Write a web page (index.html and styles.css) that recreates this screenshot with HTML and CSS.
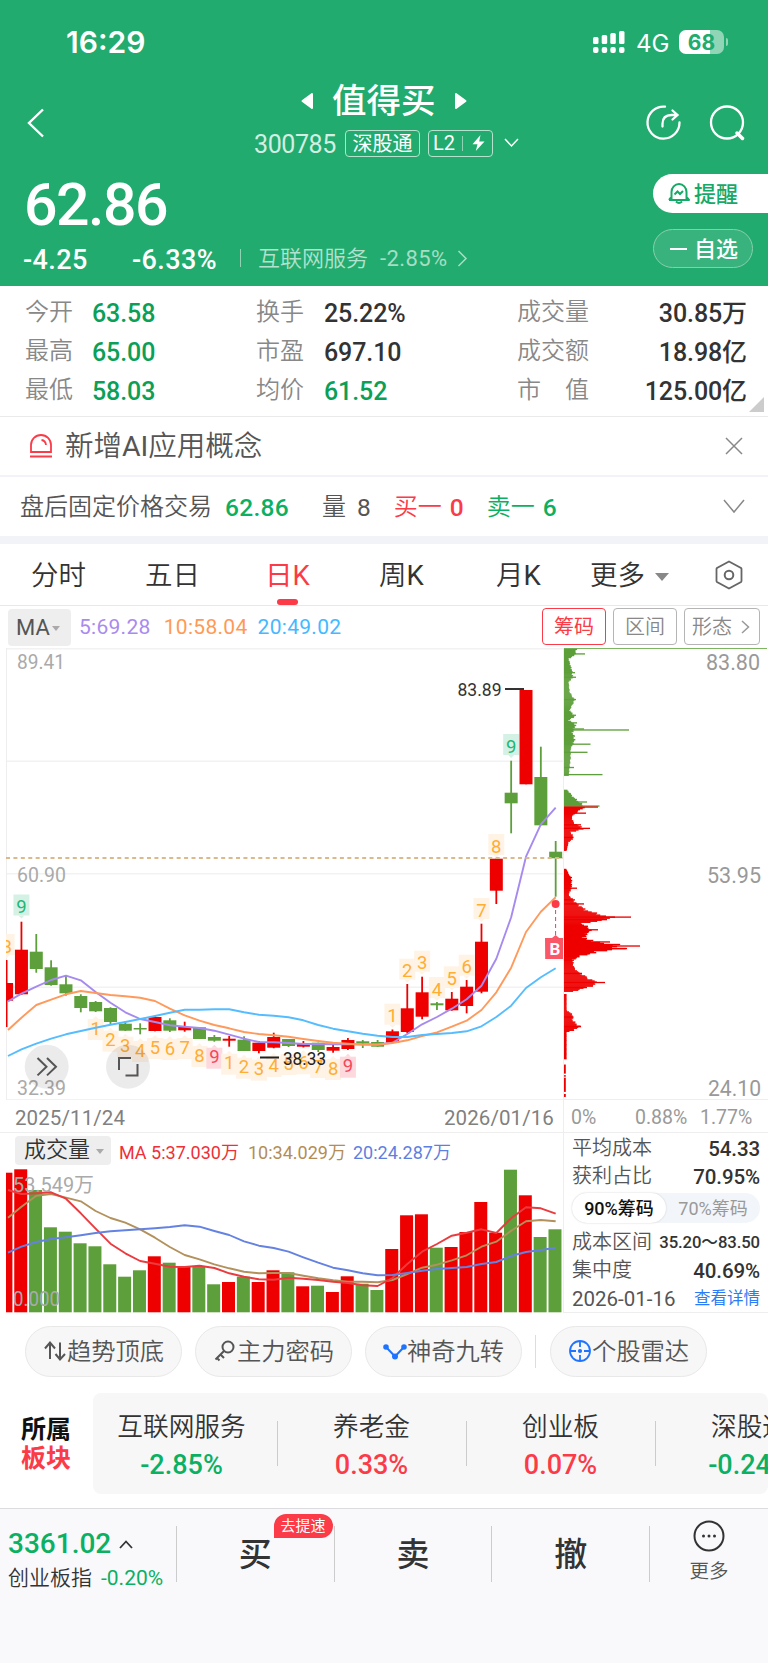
FILE: index.html
```html
<!DOCTYPE html>
<html lang="zh-CN">
<head>
    <meta charset="UTF-8">
    <meta name="viewport" content="width=device-width, initial-scale=1.0">
    <title>值得买 300785</title>
    <link rel="stylesheet" href="styles.css">
</head>
<body>

    <header>
        <div class="status-bar">
            <span class="time">16:29</span>
            <svg class="signal" width="33" height="24" viewBox="0 0 33 24" fill="#fff">
                <rect x="0" y="7" width="5.5" height="7" rx="1.5"/><rect x="8.7" y="5" width="5.5" height="9" rx="1.5"/>
                <rect x="17.3" y="3" width="5.5" height="11" rx="1.5"/><rect x="26" y="1" width="5.5" height="13" rx="1.5"/>
                <rect x="0" y="17" width="5.5" height="6" rx="2"/><rect x="8.7" y="17" width="5.5" height="6" rx="2"/>
                <rect x="17.3" y="17" width="5.5" height="6" rx="2"/><rect x="26" y="17" width="5.5" height="6" rx="2"/>
            </svg>
            <span class="network">4G</span>
            <span class="battery">68</span>
            <span class="battery-tip"></span>
        </div>

        <div class="nav">
            <svg class="back" width="18" height="30" viewBox="0 0 18 30" fill="none" stroke="#fff" stroke-width="2.4"><path d="M16 1.5 2 15l14 13.5"/></svg>
            <div class="title">
                <h1>
                    <svg width="12" height="18" viewBox="0 0 12 18"><path d="M11 2v14L1.5 9z" fill="#fff" stroke="#fff" stroke-width="2" stroke-linejoin="round"/></svg>
                    <span>值得买</span>
                    <svg width="12" height="18" viewBox="0 0 12 18"><path d="M1 2v14L10.5 9z" fill="#fff" stroke="#fff" stroke-width="2" stroke-linejoin="round"/></svg>
                </h1>
                <div class="code">
                    <span class="code-number">300785</span>
                    <span class="tag">深股通</span>
                    <span class="tag level">L2<i></i><svg width="13" height="16" viewBox="0 0 13 16"><path d="M8.5 0 0.5 9.2h5L3.8 16 12.5 6.5H7.2z" fill="#fff"/></svg></span>
                    <svg width="15" height="10" viewBox="0 0 15 10" fill="none" stroke="#fff" stroke-width="1.5"><path d="M1 1l6.5 7L14 1"/></svg>
                </div>
            </div>
            <svg class="share" width="38" height="38" viewBox="0 0 38 38" fill="none" stroke="#fff" stroke-width="2.3">
                <path d="M20 2.7A16 16 0 1 0 34.5 18.5" stroke-linecap="round"/>
                <path d="M17.5 22.5v-2.5c0-6 3-9 9-9h4.5M27.5 6.5l5 4.5-5 4.5" stroke-linecap="round"/>
            </svg>
            <svg class="search" width="38" height="38" viewBox="0 0 38 38" fill="none" stroke="#fff">
                <circle cx="18" cy="18.5" r="16" stroke-width="2.3"/><path d="M28 29l5.5 5.5" stroke-width="3.5" stroke-linecap="round"/>
            </svg>
        </div>

        <div class="quote">
            <div class="quote-left">
                <div class="price">62.86</div>
                <div class="change">
                    <span class="diff">-4.25</span>
                    <span class="percent">-6.33%</span>
                    <i></i>
                    <span class="industry">互联网服务</span>
                    <span class="industry-rate">-2.85%</span>
                    <svg width="11" height="17" viewBox="0 0 11 17" fill="none" stroke="#a6dec5" stroke-width="1.5"><path d="M1.5 1 9 8.5 1.5 16"/></svg>
                </div>
            </div>
            <div class="actions">
                <div class="remind">
                    <svg width="22" height="23" viewBox="0 0 22 23" fill="none" stroke="#16a967" stroke-width="2">
                        <path d="M3.5 17.5V10a7.5 8 0 0 1 15 0v7.5M1 18h20l-2.5-3M1 18l2.5-3" stroke-linejoin="round"/>
                        <path d="M8 19.5q3 3 6 0M6.5 12.5 9.5 9.5l2.5 2.5 3-3"/>
                    </svg>
                    <span>提醒</span>
                </div>
                <div class="favorite"><i></i><span>自选</span></div>
            </div>
        </div>
    </header>

    <section class="stats">
        <span class="label">今开</span><span class="down">63.58</span><span class="label">换手</span><span>25.22%</span><span class="label">成交量</span><span class="right">30.85万</span>
        <span class="label">最高</span><span class="down">65.00</span><span class="label">市盈</span><span>697.10</span><span class="label">成交额</span><span class="right">18.98亿</span>
        <span class="label">最低</span><span class="down">58.03</span><span class="label">均价</span><span class="down">61.52</span><span class="label">市<b></b>值</span><span class="right">125.00亿</span>
        <svg class="corner" width="15" height="15" viewBox="0 0 15 15"><path d="M15 0v15H0z" fill="#ccc"/></svg>
    </section>

    <div class="news">
        <svg width="24" height="26" viewBox="0 0 24 26" fill="none" stroke="#fb3b48" stroke-width="1.8"><path d="M2 19V12a10 10 0 0 1 20 0v7zM1 23.5h22M12.5 7q4 .5 4.5 5"/></svg>
        <span>新增<em>AI</em>应用概念</span>
        <svg class="close" width="18" height="18" viewBox="0 0 18 18" stroke="#888" stroke-width="1.5"><path d="M1 1l16 16M17 1 1 17"/></svg>
    </div>

    <div class="after-hours">
        <span>盘后固定价格交易</span>
        <span class="num green fixed-price">62.86</span>
        <span class="qty">量</span><span class="num count">8</span>
        <span class="red bid">买一</span><span class="num red">0</span>
        <span class="green ask">卖一</span><span class="num green">6</span>
        <svg width="22" height="15" viewBox="0 0 22 15" fill="none" stroke="#888" stroke-width="1.5"><path d="M1 1l10 12L21 1"/></svg>
    </div>

    <nav class="tabs">
        <a>分时</a>
        <a>五日</a>
        <a class="active">日K</a>
        <a>周<em>K</em></a>
        <a>月<em>K</em></a>
        <a class="more">更多<i class="arrow"></i></a>
        <svg width="28" height="30" viewBox="0 0 28 30" fill="none" stroke="#666"><path d="M14 1.5 26 8q.5 .5 .5 1v12q0 .5-.5 1L14 28.5 2 22q-.5-.5-.5-1V9q0-.5.5-1z" stroke-width="1.8"/><circle cx="14" cy="15" r="4.3" stroke-width="2"/></svg>
    </nav>

    <div class="toolbar">
        <div class="select">MA<i class="arrow small"></i></div>
        <span class="ma5">5:69.28</span>
        <span class="ma10">10:58.04</span>
        <span class="ma20">20:49.02</span>
        <button class="selected">筹码</button>
        <button>区间</button>
        <button class="shape">形态<svg width="9" height="14" viewBox="0 0 9 14" fill="none" stroke="#999" stroke-width="1.5"><path d="M1 1l6.5 6L1 13"/></svg></button>
    </div>

    <main class="charts">
        <svg id="kline" width="563" height="452" viewBox="0 648 563 452"></svg>
        <svg id="chips" width="205" height="452" viewBox="563 648 205 452"></svg>

        <div class="dates"><span>2025/11/24</span><span>2026/01/16</span></div>
        <div class="ratios"><span>0%</span><span>0.88%</span><span>1.77%</span></div>

        <div class="volume">
            <div class="volume-head">
                <div class="select">成交量<i class="arrow small"></i></div>
                <span class="v5">MA 5:37.030万</span>
                <span class="v10">10:34.029万</span>
                <span class="v20">20:24.287万</span>
            </div>
            <svg id="volume" width="563" height="146" viewBox="0 1167 563 146"></svg>
        </div>
        <div class="cost">
            <p>平均成本<b>54.33</b></p>
            <p>获利占比<b>70.95%</b></p>
            <div class="toggle"><span class="on">90%筹码</span><span>70%筹码</span></div>
            <p>成本区间<b class="range">35.20～83.50</b></p>
            <p>集中度<b>40.69%</b></p>
            <p><span class="day">2026-01-16</span><a>查看详情</a></p>
        </div>
    </main>

    <div class="tools">
        <div class="tool"><svg width="24" height="24" viewBox="0 0 24 24" fill="none" stroke="#555" stroke-width="2"><path d="M7 20V4M2 9.5l5-6L12 9.5M17 3.5v17M12.5 15l4.5 5.5 5-5.5"/></svg>趋势顶底</div>
        <div class="tool"><svg width="24" height="24" viewBox="0 0 24 24" fill="none" stroke="#555" stroke-width="2"><circle cx="15" cy="8" r="5.5"/><path d="M11 12 2.5 20.5M7.5 15.5l3.5 3.5M4 19l2.5 2.5"/></svg>主力密码</div>
        <div class="tool"><svg width="24" height="24" viewBox="0 0 24 24" fill="#1f74ff" stroke="#1f74ff" stroke-width="2"><path d="M3 8l9 9.5L21 8" fill="none"/><circle cx="3" cy="8" r="1.8"/><circle cx="12" cy="17.5" r="2"/><circle cx="21" cy="8" r="1.8"/></svg>神奇九转</div>
        <i></i>
        <div class="tool"><svg width="24" height="24" viewBox="0 0 24 24" fill="none" stroke="#1f74ff" stroke-width="1.8"><circle cx="12" cy="12" r="10"/><path d="M12 2v6M12 16v6M2 12h6M16 12h6"/><circle cx="12" cy="12" r="1.2" fill="#1f74ff"/></svg>个股雷达</div>
    </div>

    <div class="sectors">
        <div class="sectors-title">所属<br><span class="red">板块</span></div>
        <div class="sectors-list">
            <div class="sector"><span>互联网服务</span><b class="green">-2.85%</b></div>
            <div class="sector"><span>养老金</span><b class="red">0.33%</b></div>
            <div class="sector"><span>创业板</span><b class="red">0.07%</b></div>
            <div class="sector"><span>深股通</span><b class="green">-0.24%</b></div>
        </div>
    </div>

    <footer>
        <div class="index">
            <div class="index-value">3361.02<svg width="14" height="9" viewBox="0 0 14 9" fill="none" stroke="#333" stroke-width="1.8"><path d="M1 8l6-6.5L13 8"/></svg></div>
            <div class="index-name">创业板指<span>-0.20%</span></div>
        </div>
        <div class="trade">买<span class="badge">去提速</span></div>
        <div class="trade">卖</div>
        <div class="trade">撤</div>
        <div class="more-menu">
            <svg width="32" height="32" viewBox="0 0 32 32" fill="#333"><circle cx="16" cy="16" r="14.5" fill="none" stroke="#333" stroke-width="2"/><circle cx="10.5" cy="16" r="1.5"/><circle cx="16" cy="16" r="1.5"/><circle cx="21.5" cy="16" r="1.5"/></svg>
            更多
        </div>
    </footer>

    <script src="chart.js"></script>

</body>
</html>
```
FILE: styles.css
```css
body {
    margin: 0;
    width: 768px;
    height: 1663px;
    overflow: hidden;
    background-color: #fff;
    color: #333;
    font-family: Roboto, "Noto Sans CJK SC", sans-serif;
}

svg {
    display: block;
    flex-shrink: 0;
}

em {
    font-style: normal;
    font-weight: 400;
}

.red {
    color: #fb3b48;
}

.green {
    color: #0bb062;
}

/* Header */
header {
    background-color: #22ab6e;
    color: #fff;
    height: 286px;
}

.status-bar {
    display: flex;
    align-items: center;
    height: 84px;
    font-family: Inter, sans-serif;
}

.time {
    margin-left: 66px;
    width: 527px;
    font-size: 30px;
    font-weight: 600;
}

.network {
    margin-left: 10px;
    width: 43px;
    font-size: 24px;
    padding-top: 2px;
}

.battery {
    width: 45px;
    height: 24px;
    border-radius: 7px;
    background: linear-gradient(to right, #fff 68%, #90d5b6 68%);
    color: #22ab6e;
    font-size: 21px;
    font-weight: 700;
    line-height: 25px;
    text-align: center;
}

.battery-tip {
    margin-left: 2px;
    width: 2px;
    height: 8px;
    border-radius: 0 3px 3px 0;
    background-color: #90d5b6;
}

.nav {
    display: flex;
    height: 80px;
}

.back {
    margin: 24px 0 0 27px;
}

.title {
    width: 582px;
    padding-left: 209px;
    box-sizing: border-box;
}

h1 {
    display: flex;
    align-items: center;
    gap: 19px;
    margin: 0 0 0 47px;
    height: 34px;
    font-size: 34.5px;
    font-weight: 500;
    line-height: 37px;
}

.code {
    display: flex;
    align-items: center;
    margin-top: 12px;
    height: 26px;
}

.code-number {
    width: 91px;
    font-size: 25px;
    letter-spacing: -0.4px;
    line-height: 29px;
    padding-top: 2px;
    color: #d3eee2;
}

.tag {
    box-sizing: border-box;
    width: 75px;
    height: 27px;
    margin-right: 8px;
    border: 1px solid #b5e2cd;
    border-radius: 4px;
    font-size: 20px;
    line-height: 27px;
    text-align: center;
}

.level {
    display: flex;
    align-items: center;
    width: 65px;
    padding-left: 4px;
    margin-right: 11px;
}

.level i {
    width: 1px;
    height: 15px;
    margin: 0 9px 0 7px;
    background-color: #8fd3b4;
}

.share {
    margin: 20px 26px 0 18px;
}

.search {
    margin-top: 20px;
}

.quote {
    display: flex;
    justify-content: space-between;
}

.price {
    margin-left: 24px;
    height: 80px;
    font-size: 59px;
    font-weight: 500;
    line-height: 81px;
    letter-spacing: -1.5px;
}

.change {
    display: flex;
    align-items: center;
    height: 32px;
    padding-left: 23px;
    font-size: 27px;
    font-weight: 500;
    letter-spacing: 0.4px;
}

.diff {
    width: 109px;
}

.percent {
    width: 108px;
}

.change i {
    width: 1px;
    height: 18px;
    margin: 0 17px 4px 0;
    background-color: #8fd3b4;
}

.industry {
    width: 122px;
    height: 32px;
    font-size: 22px;
    font-weight: 350;
    line-height: 29px;
    letter-spacing: 0;
    color: #b3e1cd;
}

.industry-rate {
    width: 77px;
    height: 32px;
    font-size: 22px;
    font-weight: 400;
    line-height: 29px;
    color: #a6dec5;
}

.change svg {
    margin-bottom: 4px;
}

.actions {
    padding-top: 10px;
    width: 115px;
    font-size: 22px;
    font-weight: 500;
}

.actions span {
    height: 26px;
    line-height: 27px;
}

.remind {
    display: flex;
    align-items: center;
    gap: 4px;
    height: 39px;
    padding-left: 15px;
    border-radius: 20px 0 0 20px;
    background-color: #fff;
    color: #16a967;
}

.favorite {
    display: flex;
    align-items: center;
    box-sizing: border-box;
    width: 100px;
    height: 39px;
    margin-top: 16px;
    padding-left: 16px;
    border: 1px solid #86cfae;
    border-radius: 20px;
    background-color: #38b37d;
}

.favorite i {
    width: 17px;
    height: 2px;
    margin-right: 7px;
    background-color: #fff;
}

/* Quote details */
.stats {
    position: relative;
    display: grid;
    grid-template-columns: 67px 164px 68px 193px 100px 129px;
    grid-auto-rows: 39px;
    height: 126px;
    padding: 4px 0 0 25px;
    border-bottom: 1px solid #eaeaec;
    font-size: 25px;
    font-weight: 500;
    line-height: 47px;
    letter-spacing: -0.1px;
}

.stats .label {
    font-size: 24px;
    font-weight: 350;
    line-height: 45px;
    letter-spacing: 0;
    color: #888;
}

.stats .label b {
    display: inline-block;
    width: 24px;
}

.stats .down {
    color: #0c9f57;
}

.stats .right {
    margin-right: -1px;
    text-align: right;
    white-space: nowrap;
}

.corner {
    position: absolute;
    right: 4px;
    bottom: 4px;
}

.news {
    display: flex;
    align-items: center;
    height: 58px;
    padding: 0 25px 0 29px;
    border-bottom: 2px solid #f2f3f8;
    font-size: 28.5px;
    font-weight: 350;
    line-height: 60px;
    color: #555;
}

.news span {
    height: 58px;
    margin-left: 12px;
}

.news .close {
    margin-left: auto;
}

.after-hours {
    display: flex;
    align-items: center;
    height: 59px;
    padding: 0 23px 0 20px;
    font-size: 24px;
    font-weight: 350;
    line-height: 32px;
    color: #555;
}

.after-hours span {
    height: 32px;
}

.after-hours .num {
    font-size: 24.5px;
    font-weight: 500;
    line-height: 34px;
    margin-left: 8px;
}

.after-hours .fixed-price {
    margin-left: 13px;
    letter-spacing: 0.3px;
}

.after-hours .count {
    margin-left: 11px;
    font-weight: 400;
}

.after-hours .bid,
.after-hours .ask {
    width: 48px;
    margin-left: 23px;
    white-space: nowrap;
}

.after-hours .qty {
    margin-left: 33px;
}

.after-hours svg {
    margin-left: auto;
}

/* Period tabs */
.tabs {
    display: flex;
    align-items: center;
    height: 61px;
    padding-left: 31px;
    border-top: 8px solid #f2f3f8;
    border-bottom: 1px solid #e8e8ea;
    font-size: 27.5px;
    font-weight: 350;
}

.tabs a {
    position: relative;
    width: 114px;
    height: 61px;
    line-height: 63px;
}

.tabs a:nth-child(2) {
    width: 120px;
}

.tabs a:nth-child(4) {
    width: 117px;
}

.tabs a:nth-child(5) {
    width: 94px;
}

.tabs .active {
    color: #fb3b48;
    font-weight: 400;
}

.tabs .active::after {
    content: "";
    position: absolute;
    left: 12px;
    bottom: 0;
    width: 21px;
    height: 6px;
    border-radius: 3px;
    background-color: #fb3b48;
}

.tabs .more {
    width: 125px;
}

.arrow {
    display: inline-block;
    border: 7px solid transparent;
    border-top: 8px solid #888;
    border-bottom: 0;
    margin-left: 10px;
    vertical-align: 4px;
}

.arrow.small {
    border-width: 5px 4.5px 0;
    border-top-color: #aaa;
    margin-left: 2px;
}

.toolbar {
    display: flex;
    align-items: center;
    height: 42px;
    padding: 0 8px;
    font-size: 21px;
    letter-spacing: 0.3px;
}

.select {
    box-sizing: border-box;
    width: 63px;
    height: 37px;
    padding-left: 8px;
    border-radius: 4px;
    background-color: #eee;
    color: #555;
    font-size: 22px;
    line-height: 37px;
    letter-spacing: 0;
    white-space: nowrap;
}

.ma5 {
    margin-left: 8px;
    width: 85px;
    color: #a98bf0;
}

.ma10 {
    width: 94px;
    color: #ff9a56;
}

.ma20 {
    width: 285px;
    color: #46b8ff;
}

.toolbar button {
    box-sizing: border-box;
    flex-shrink: 0;
    width: 64px;
    height: 37px;
    margin: -1px 7px 0 0;
    padding: 0;
    border: 1px solid #b5b5b5;
    border-radius: 4px;
    background-color: #fff;
    color: #888;
    font: 350 20px/36px Roboto, "Noto Sans CJK SC", sans-serif;
    letter-spacing: 0;
}

.toolbar .selected {
    border-color: #fb3b48;
    color: #fb3b48;
    font-weight: 400;
}

.toolbar .shape {
    display: flex;
    align-items: center;
    width: 76px;
    padding-left: 7px;
    margin-right: 0;
}

.shape svg {
    margin-left: 9px;
}

/* Charts */
.charts {
    display: grid;
    grid-template-columns: 563px 205px;
    grid-template-rows: 452px 33px 180px;
}

.charts text {
    white-space: pre;
}

.dates {
    display: flex;
    justify-content: space-between;
    align-items: center;
    padding: 3px 9px 0 15px;
    border-bottom: 1px solid #eee;
    font-size: 20.5px;
    letter-spacing: 0.1px;
    color: #808080;
}

.ratios {
    display: flex;
    align-items: center;
    padding: 3px 0 0 7px;
    border-left: 1px solid #eee;
    border-bottom: 1px solid #eee;
    font-size: 19.5px;
    color: #999;
}

.ratios span:nth-child(1) {
    width: 64px;
}

.ratios span:nth-child(2) {
    width: 65px;
}

.volume-head {
    display: flex;
    align-items: center;
    height: 34px;
    padding: 1px 0 0 15px;
    box-sizing: border-box;
    font-size: 18px;
    white-space: nowrap;
}

.volume-head .select {
    width: 96px;
    height: 29px;
    padding-left: 9px;
    margin-right: 8px;
    color: #333;
    font-weight: 350;
    font-size: 22px;
    line-height: 28px;
}

.volume-head .select .arrow {
    margin-left: 6px;
    vertical-align: 3px;
}

.v5 {
    width: 129px;
    color: #ee3037;
}

.v10 {
    width: 105px;
    color: #b38d55;
}

.v20 {
    color: #5f7fe0;
}

.cost {
    box-sizing: border-box;
    height: 180px;
    padding: 1px 8px 0;
    border-left: 1px solid #eee;
    border-bottom: 1px solid #eee;
    font-size: 20px;
    font-weight: 350;
    color: #555;
}

.cost p {
    display: flex;
    justify-content: space-between;
    margin: 0;
    height: 28px;
    line-height: 29px;
    white-space: nowrap;
}

.cost b {
    font-size: 20.5px;
    font-weight: 500;
    letter-spacing: -0.1px;
    line-height: 30px;
    color: #333;
}

.cost .range {
    font-size: 16.7px;
}

.cost .day {
    font-size: 20.5px;
    font-weight: 400;
    line-height: 30px;
}

.cost a {
    font-size: 16.5px;
    font-weight: 400;
    line-height: 30px;
    color: #2b7bf7;
}

.toggle {
    display: flex;
    height: 30px;
    margin: 3px 0 5px;
    border-radius: 15px;
    background-color: #f2f5f9;
    color: #999;
    font-size: 18px;
    font-weight: 400;
    line-height: 32px;
    text-align: center;
}

.toggle span {
    width: 94px;
}

.toggle .on {
    border-radius: 15px;
    background-color: #fff;
    box-shadow: 0 0 2px #ccc;
    color: #111;
    font-weight: 500;
}

.tools {
    display: flex;
    align-items: center;
    height: 76px;
    padding: 0 0 0 25px;
}

.tool {
    display: flex;
    align-items: center;
    justify-content: center;
    box-sizing: border-box;
    width: 157px;
    height: 51px;
    margin-right: 13px;
    border: 1px solid #e8e8e8;
    border-radius: 26px;
    background-color: #f7f7f7;
    font-size: 24.3px;
    font-weight: 350;
    line-height: 47px;
    color: #555;
}

.tools i {
    width: 1px;
    height: 33px;
    margin-right: 14px;
    background-color: #ddd;
}

/* Sectors */
.sectors {
    display: flex;
    height: 101px;
    margin-top: 4px;
}

.sectors-title {
    width: 93px;
    box-sizing: border-box;
    padding: 22px 0 0 21px;
    font-size: 25px;
    font-weight: 700;
    line-height: 29px;
    color: #111;
}

.sectors-title .red {
    color: #fb3b48;
}

.sectors-list {
    display: flex;
    width: 675px;
    overflow: hidden;
    border-radius: 8px;
    background-color: #f7f7f8;
}

.sector {
    display: flex;
    flex-direction: column;
    align-items: center;
    flex-shrink: 0;
    position: relative;
    box-sizing: border-box;
    width: 189px;
    padding: 16px 2px 0 0;
    font-size: 25.7px;
    font-weight: 350;
    line-height: 36px;
}

.sector:first-child {
    width: 185px;
    padding-right: 8px;
}

.sector b {
    font-size: 27px;
    font-weight: 500;
    line-height: 40px;
}

.sector::after {
    content: "";
    position: absolute;
    right: 0;
    top: 28px;
    width: 1px;
    height: 45px;
    background-color: #ccc;
}

/* Bottom bar */
footer {
    display: flex;
    height: 154px;
    margin-top: 14px;
    border-top: 1px solid #dcdce0;
    background-color: #f9f9fc;
}

.index {
    width: 168px;
    padding: 17px 0 0 8px;
    white-space: nowrap;
}

.index-value {
    display: flex;
    align-items: center;
    gap: 8px;
    height: 36px;
    color: #0bb062;
    font-size: 28px;
    font-weight: 500;
    line-height: 38px;
}

.index-name {
    font-size: 21px;
    font-weight: 350;
    line-height: 32px;
}

.index-name span {
    margin-left: 9px;
    color: #0bb062;
    font-size: 21px;
    font-weight: 400;
}

.trade {
    position: relative;
    width: 157px;
    height: 56px;
    margin-top: 17px;
    border-left: 1px solid #ccc;
    font-size: 33px;
    font-weight: 500;
    line-height: 58px;
    text-align: center;
}

.badge {
    position: absolute;
    top: -12px;
    right: 1px;
    width: 59px;
    height: 24px;
    border-radius: 12px 12px 12px 0;
    background-color: #fb3b48;
    color: #fff;
    font-size: 15px;
    font-weight: 400;
    line-height: 24px;
}

.more-menu {
    display: flex;
    flex-direction: column;
    align-items: center;
    width: 118px;
    height: 56px;
    margin-top: 17px;
    border-left: 1px solid #ccc;
    font-size: 19.5px;
    font-weight: 350;
    line-height: 40px;
    color: #555;
}

.more-menu svg {
    margin-top: -6px;
}
```
FILE: chart.js
```js
const RED = "#ee0000";
const GREEN = "#5d9f3a";
const STEP = 14.84;

// [up, high, open/close top, open/close bottom, low]
const candles = [
    [1, 960, 983, 1000.7, 1027], [1, 921.7, 949.7, 994.3, 995], [0, 934, 951.7, 969, 972.7], [0, 960.3, 967.3, 985, 985.7],
    [0, 976, 984.3, 993.3, 995.7], [0, 994.3, 996, 1008, 1012.3], [0, 1001, 1002, 1011.3, 1012], [0, 1007.3, 1008, 1022, 1024],
    [0, 1021, 1023.7, 1030.7, 1031], [0, 1023.3, 1028, 1029.5, 1034.3], [1, 1016, 1017, 1031, 1031.3], [0, 1018.3, 1020.3, 1030.7, 1032],
    [1, 1021.7, 1027, 1030.3, 1031.7], [0, 1027.3, 1027.3, 1039, 1039], [0, 1035, 1037, 1040.7, 1041.7], [1, 1036, 1038.7, 1040.7, 1046.7],
    [0, 1036.3, 1039.7, 1051, 1051], [1, 1041, 1042.7, 1051, 1053.3], [1, 1032.7, 1037, 1047.7, 1048.3], [0, 1039, 1039, 1046, 1047],
    [1, 1041, 1043, 1046.7, 1047.5], [0, 1042.7, 1042.7, 1050, 1052], [1, 1045, 1047, 1050.7, 1052.7], [1, 1038, 1040, 1049, 1050],
    [0, 1040, 1041.3, 1043.3, 1048], [0, 1040, 1042, 1046.7, 1046.7], [1, 1029.5, 1031.3, 1042.7, 1042.7], [1, 984, 1008.3, 1032, 1033.3],
    [1, 976.7, 992.3, 1016.7, 1019.3], [0, 1002, 1003.3, 1005.3, 1010], [1, 992, 998.7, 1010.3, 1010.7], [1, 980, 986.7, 1006, 1013.3],
    [1, 923.7, 941.7, 991.7, 993.3], [1, 858.7, 858.7, 890.7, 904], [0, 760.7, 792.7, 803.3, 833.3], [1, 690, 690, 784.3, 784.3],
    [0, 746.7, 777, 825.3, 825.3], [0, 841, 851.7, 858.3, 896.7]
];

const ma5 = [1001.3, 993.7, 986.7, 980, 975.7, 980.3, 992, 1002.7, 1012.3, 1019, 1022, 1025.3, 1026.7, 1028, 1030.7, 1034.7, 1038.7, 1042, 1042.3, 1043, 1044, 1044, 1044.3, 1044.3, 1044.3, 1044.3, 1042.7, 1034, 1024.3, 1017, 1008.7, 999.3, 985.7, 958.7, 917.3, 856.7, 824.3, 807.7];
const ma10 = [1030, 1017.7, 1005, 999.7, 994.3, 991, 993, 995, 996.3, 997.7, 1001, 1008.7, 1015.3, 1020.7, 1025, 1028.3, 1032, 1034, 1035.3, 1036.7, 1039, 1041, 1042.7, 1043.7, 1044.7, 1044.7, 1043, 1040.3, 1036, 1032.3, 1026.7, 1020.7, 1010, 992.3, 967.7, 932, 911.7, 897.3];
const ma20 = [1056, 1049.3, 1043.7, 1038.7, 1034.3, 1031, 1027.7, 1024.7, 1022, 1019, 1016, 1012.7, 1009.7, 1009.7, 1009.3, 1009.3, 1012.3, 1014.7, 1015.7, 1017.3, 1020.3, 1025, 1028.7, 1031.3, 1033.7, 1035.7, 1037, 1037, 1035, 1034, 1033, 1031.3, 1026.3, 1017, 1005.7, 988, 977.3, 968.3];

// nine-turn marks: [candle, count, centre y, above the candle]
const marks = [
    [0, 8, 946, 1], [1, 9, 906.5, 1, "g"], [6, 1, 1028, 0], [7, 2, 1039.7, 0], [8, 3, 1045.7, 0], [9, 4, 1050, 0], [10, 5, 1047, 0],
    [11, 6, 1048, 0], [12, 7, 1047, 0], [13, 8, 1055, 0], [14, 9, 1056.7, 0, "r"], [15, 1, 1062.7, 0], [16, 2, 1066.7, 0], [17, 3, 1068.7, 0],
    [18, 4, 1065, 0], [19, 5, 1063, 0], [20, 6, 1062.3, 0], [21, 7, 1066, 0], [22, 8, 1068, 0], [23, 9, 1065.7, 0, "r"],
    [26, 1, 1015.7, 1], [27, 2, 970.7, 1], [28, 3, 962.7, 1], [29, 4, 989, 1], [30, 5, 978.3, 1], [31, 6, 966.7, 1], [32, 7, 910, 1],
    [33, 8, 846, 1], [34, 9, 746, 1, "g"]
];
const markColors = { g: ["#d5f1e6", "#1fb876"], r: ["#fdd9de", "#f5475b"], o: ["#fff3e5", "#ffad33"] };

const volumes = [1172.7, 1169.3, 1190, 1227.3, 1231.7, 1243.3, 1246.3, 1264.3, 1276.7, 1270.3, 1256.3, 1262.7, 1267, 1267, 1284.3, 1282, 1276.7, 1282, 1270.3, 1272.3, 1286.3, 1285.7, 1292, 1276.3, 1283.7, 1290, 1249, 1215.3, 1214.3, 1247.7, 1247, 1232, 1202, 1232.7, 1169.7, 1195.3, 1237, 1229.3];
const vol5 = [1190, 1194, 1193.3, 1192.3, 1198.7, 1213.3, 1228.7, 1243.7, 1253.3, 1261, 1263.7, 1266.7, 1267, 1265.7, 1268, 1273.3, 1276.7, 1279.3, 1279.7, 1277.7, 1278.7, 1280, 1281.7, 1283, 1285.3, 1286, 1278, 1264, 1251.7, 1244, 1235.7, 1232.7, 1229.3, 1233, 1218.3, 1207.3, 1208.3, 1213.7];
const vol10 = [1217.7, 1206.7, 1195.7, 1194, 1197.7, 1201.3, 1211, 1218, 1222.7, 1229.3, 1237.7, 1247, 1255, 1259.3, 1264.3, 1268.3, 1271.7, 1273.3, 1273, 1273, 1275.7, 1278.3, 1280.3, 1281.7, 1281.7, 1282.3, 1280, 1274, 1267.7, 1264.7, 1260.3, 1255.3, 1246.7, 1241.7, 1230.7, 1221.3, 1220, 1221.3];
const vol20 = [1252.7, 1246.7, 1242, 1239, 1237.3, 1235.3, 1233, 1231.3, 1230.3, 1229.3, 1228.3, 1227, 1225.3, 1226.7, 1231, 1235, 1241.3, 1245.7, 1248, 1251.7, 1257.3, 1262.7, 1267.7, 1270.3, 1273.3, 1275.3, 1275, 1273, 1270.7, 1269, 1268, 1267, 1264, 1262, 1256, 1252, 1250, 1247.7];

const centre = i => 6.6 + STEP * i;

function rect(x, y, w, h, fill) {
    return `<rect x="${x}" y="${y}" width="${w}" height="${h}" fill="${fill}"/>`;
}

function text(x, y, size, fill, value, width, extra = "") {
    const fit = width ? `textLength="${width}" lengthAdjust="spacingAndGlyphs"` : "";
    return `<text x="${x}" y="${y}" font-size="${size}" fill="${fill}" ${fit} ${extra}>${value}</text>`;
}

function line(values, color) {
    const points = values.map((y, i) => `${Math.max(centre(i), 8)},${y}`).join(" ");
    return `<polyline points="${points}" fill="none" stroke="${color}" stroke-width="1.9" stroke-linejoin="round"/>`;
}

function drawKline() {
    let out = "";
    [648, 760.5, 873, 986.5, 1099].forEach(y => out += rect(6, y, 557, 1.5, "#f2f2f2"));
    out += rect(6, 648, 1, 452, "#eee");

    out += `<svg x="6" y="648" width="557" height="452" viewBox="6 648 557 452">`;
    marks.forEach(([i, count, y, above, kind]) => {
        const [bg, fg] = markColors[kind || "o"];
        const x = centre(i);
        const top = above ? y - 12 : y - 9;
        out += rect(x - 8, top, 16, 21, bg);
        out += above
            ? `<path d="M${x - 3} ${top + 21}h6l-3 3z" fill="${bg}"/>`
            : `<path d="M${x - 3} ${top}h6l-3 -3z" fill="${bg}"/>`;
        out += text(x, y + 6.5, 18.5, fg, count, 0, `text-anchor="middle"`);
    });
    candles.forEach(([up, high, top, bottom, low], i) => {
        const color = up ? RED : GREEN;
        out += rect(centre(i) - 0.9, high, 1.8, low - high, color);
        out += rect(centre(i) - 6.5, top, 13, bottom - top, color);
    });
    out += `</svg>`;

    out += line(ma5, "#a58af0") + line(ma10, "#ff9a5c") + line(ma20, "#55bdff");
    out += `<path d="M6 858H563" stroke="#dcb98a" stroke-width="2" stroke-dasharray="4 3.42"/>`;

    out += text(17, 669, 20.5, "#aaa", "89.41", 48);
    out += text(17, 882, 20.5, "#aaa", "60.90", 49);
    out += text(17, 1095, 20.5, "#aaa", "32.39", 49);

    out += rect(505, 688, 19, 2, "#333") + text(457.5, 695.5, 18.5, "#333", "83.89", 44);
    out += rect(260, 1056.5, 19, 2, "#222") + text(283, 1065, 18.5, "#222", "38.33", 43);

    // buy marker
    out += `<circle cx="555.6" cy="904" r="4" fill="#fb3b48"/>`;
    out += `<path d="M555.6 910V936" stroke="#fb3b48" stroke-dasharray="4 3"/>`;
    out += `<path d="M545 938h7l3.6-3 3.6 3h4v21h-18z" fill="#fa5866"/>`;
    out += text(555, 955, 17, "#fff", "B", 0, `text-anchor="middle" font-weight="700"`);

    // overlay buttons
    out += `<g fill="#000" fill-opacity="0.08"><circle cx="46.7" cy="1066.7" r="22"/><circle cx="128" cy="1066.7" r="22"/></g>`;
    out += `<g fill="none" stroke="#555" stroke-width="2"><path d="M37.5 1058l9 8.7-9 8.7M47 1058l9 8.7-9 8.7"/>`;
    out += `<path d="M119 1070v-12h12M137.5 1064v11.5h-12"/></g>`;
    document.getElementById("kline").innerHTML = out;
}

// chip distribution: [y, length] of the outline, and single long levels
const chipAreas = [
    [GREEN, [[648, 11], [654, 9], [657, 3], [668, 6], [676, 7], [680, 3], [690, 4], [698, 9], [704, 6], [708, 4], [714, 9], [718, 3], [722, 10], [730, 7], [738, 9], [746, 5], [755, 5], [764, 4], [773, 3]]],
    [GREEN, [[787, 2], [793, 7], [799, 14], [803, 19]]],
    [RED, [[804, 18], [808, 12], [813, 6], [819, 8], [825, 18], [828, 5], [834, 8], [838, 3], [847, 1]]],
    [RED, [[865, 1], [875, 6], [883, 6], [890, 3], [898, 10], [905, 20], [909, 32], [912, 46], [915, 38], [918, 16], [924, 25], [930, 20], [933, 18], [936, 28], [939, 48], [943, 54], [946, 33], [950, 16], [954, 7], [961, 8], [966, 12], [972, 22], [977, 32], [980, 25], [985, 8], [986, 1]]],
    [RED, [[988.5, 1], [1004, 1], [1008, 7], [1014, 7], [1020, 14], [1024, 7], [1025, 1], [1052, 1]]]
];
const chipLevels = [
    [653, 21], [669, 8], [671.5, 11], [676, 12], [698, 12], [713.5, 12], [721, 13], [727, 20], [728, 65], [734, 11], [742, 26.5], [750, 23.5],
    [765, 10], [772, 38.5], [791, 7], [799, 23], [803, 35.5],
    [804, 34, 1], [810, 22, 1], [821.5, 17, 1], [825, 26, 1], [834, 9.5, 1], [873.5, 8, 1], [884, 13, 1], [895.5, 11, 1], [899.5, 20, 1],
    [912.5, 67, 1], [915, 43, 1], [925, 34, 1], [929, 23, 1], [933.5, 23, 1], [937, 46, 1], [941, 76, 1], [943.5, 63, 1], [948.5, 25, 1],
    [955, 10, 1], [968, 18, 1], [977, 41, 1], [982, 23, 1], [1011, 9.5, 1], [1020.5, 17, 1]
];

function drawChips() {
    let out = rect(563, 648, 1, 452, "#eee") + rect(563, 1099, 205, 1, "#eee");
    out += rect(564, 647.5, 203, 1.5, "#7db560");
    // stretch the levels over the pane height
    out += `<g transform="translate(0 -8.5) scale(1 1.0142)">`;
    chipAreas.forEach(([color, outline]) => {
        let k = 0;
        for (let y = outline[0][0]; y < outline[outline.length - 1][0]; y += 1) {
            while (y >= outline[k + 1][0]) k++;
            const [y0, a] = outline[k], [y1, b] = outline[k + 1];
            const base = a + (b - a) * (y - y0) / (y1 - y0);
            const jitter = 1 + 0.14 * Math.sin(y * 2.3) * Math.cos(y * 0.9);
            out += rect(564, y, 1.5 + base * jitter, 1.4, color);
        }
    });
    chipLevels.forEach(([y, length, low]) => out += rect(564, y - 0.5, length, 1.3, low ? RED : GREEN));
    [[1058, 9], [1068.5, 1.5], [1071, 14], [1087, 3]].forEach(([y, h]) => out += rect(564, y, 1.8, h, RED));
    out += `</g>`;

    out += text(706, 670, 22, "#999", "83.80", 54);
    out += text(707, 883, 22, "#999", "53.95", 54);
    out += text(708, 1096, 22, "#999", "24.10", 53);
    document.getElementById("chips").innerHTML = out;
}

function drawVolume() {
    let out = "";
    volumes.forEach((top, i) => {
        const x = Math.max(centre(i) - 7.2, 6);
        const right = centre(i) + 5.8;
        out += rect(x, top, right - x, 1312.3 - top, candles[i][0] ? RED : GREEN);
    });
    out += line(vol10, "#b3915c") + line(vol5, "#ea3b3f") + line(vol20, "#6482e2");
    out += text(13, 1191.5, 20.5, "#aaa", "53.549万", 81);
    out += text(13, 1306, 20.5, "#aaa", "0.000", 47);
    document.getElementById("volume").innerHTML = out;
}

drawKline();
drawChips();
drawVolume();
```
